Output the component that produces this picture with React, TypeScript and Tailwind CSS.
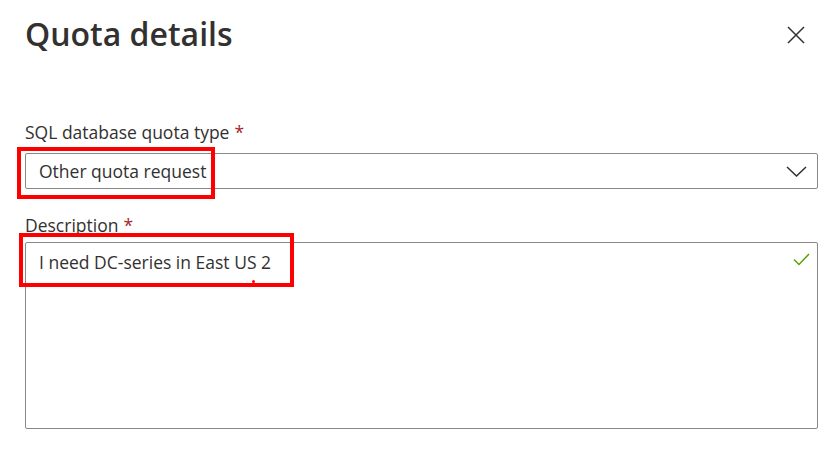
const LABEL_STYLE = 'h-[25px] flex items-end text-[17.5px] leading-[25px]';
const FIELD_BORDER = 'border border-[#8a8886] rounded-[2px] bg-white';
const HIGHLIGHT = 'absolute border-4 border-[#ff0000] pointer-events-none';

function RequiredMark() {
  return <span className="ml-[5px] text-[#a4262c]">*</span>;
}

export default function App() {
  return (
    <div className="w-[836px] h-[457px] bg-white text-[#323130] font-['Segoe_UI','Open_Sans',sans-serif] pl-[25px] pr-[18px]">
      <header className="flex items-start justify-between pt-[12px] h-[120px]">
        <h1 className="text-[32px] leading-[44px] font-semibold">Quota details</h1>
        <button className="mt-[14px] mr-[13px] text-[#323130]">
          <svg width="18" height="18" viewBox="0 0 18 18" fill="none" stroke="currentColor" strokeWidth="1.5">
            <path d="M1 1L17 17M17 1L1 17" />
          </svg>
        </button>
      </header>

      <div className={LABEL_STYLE}>
        SQL database quota type
        <RequiredMark />
      </div>
      <div className="relative mt-[8px]">
        <div className={`${FIELD_BORDER} h-[36px] flex items-center justify-between pl-[13px] pr-[10px] text-[17.5px]`}>
          <span>Other quota request</span>
          <svg width="21" height="11" viewBox="0 0 21 11" fill="none" stroke="#323130" strokeWidth="1.5">
            <path d="M1 1L10.5 10L20 1" />
          </svg>
        </div>
        <div className={`${HIGHLIGHT} -left-[8px] -top-[6px] w-[198px] h-[52px]`} />
      </div>

      <div className={`${LABEL_STYLE} mt-[24px]`}>
        Description
        <RequiredMark />
      </div>
      <div className="relative mt-[4px]">
        <div className={`${FIELD_BORDER} h-[187px] relative pl-[13px] pr-[10px] pt-[6px] text-[17.5px]`}>
          <span>I need DC-series in East US 2</span>
          <svg
            className="absolute right-[7px] top-[10px]"
            width="17"
            height="13"
            viewBox="0 0 17 13"
            fill="none"
            stroke="#57a300"
            strokeWidth="1.5"
          >
            <path d="M1 6.5L6 11.5L16 1" />
          </svg>
        </div>
        <div className={`${HIGHLIGHT} -left-[6px] -top-[9px] w-[275px] h-[54px]`} />
        <span className="absolute left-[227px] top-[38px] w-[3px] h-[3px] rounded-full bg-[#ff0000]" />
      </div>
    </div>
  );
}
